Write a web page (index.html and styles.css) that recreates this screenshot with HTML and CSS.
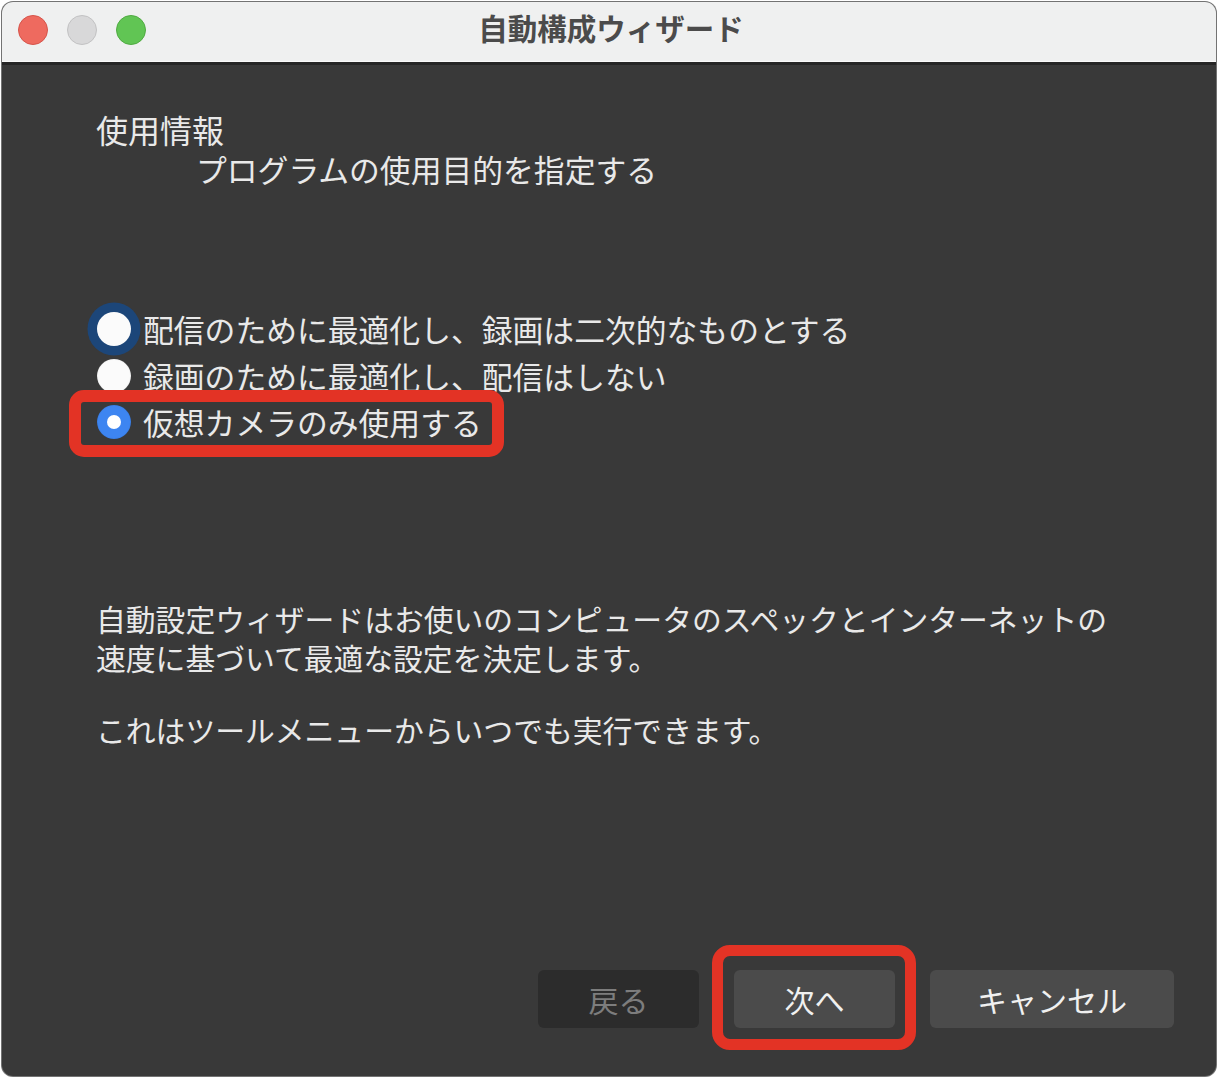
FILE: index.html
```html
<!DOCTYPE html>
<html lang="ja">
<head>
<meta charset="utf-8">
<title>自動構成ウィザード</title>
<link rel="stylesheet" href="styles.css">
</head>
<body>
<div class="window">
  <div class="titlebar">
    <div class="lights">
      <span class="light red"></span>
      <span class="light grey"></span>
      <span class="light green"></span>
    </div>
    <div class="title">自動構成ウィザード</div>
  </div>
  <div class="content">
    <div class="heading">使用情報</div>
    <div class="subheading">プログラムの使用目的を指定する</div>
    <div class="radios">
      <div class="radio-row">
        <span class="radio focus"></span>
        <span class="label">配信のために最適化し、録画は二次的なものとする</span>
      </div>
      <div class="radio-row">
        <span class="radio"></span>
        <span class="label">録画のために最適化し、配信はしない</span>
      </div>
      <div class="radio-row highlighted">
        <span class="radio checked"></span>
        <span class="label">仮想カメラのみ使用する</span>
        <span class="mark mark-radio"></span>
      </div>
    </div>
    <p class="desc">自動設定ウィザードはお使いのコンピュータのスペックとインターネットの<br>速度に基づいて最適な設定を決定します。</p>
    <p class="desc second">これはツールメニューからいつでも実行できます。</p>
    <div class="buttons">
      <button class="btn disabled">戻る</button>
      <div class="btn-wrap">
        <button class="btn">次へ</button>
        <span class="mark mark-btn"></span>
      </div>
      <button class="btn wide">キャンセル</button>
    </div>
  </div>
</div>
</body>
</html>
```

FILE: styles.css
```css
* { box-sizing: border-box; }

html, body {
  margin: 0;
  padding: 0;
  background: #ffffff;
}

body {
  padding: 2px 2px 2px 2px;
  font-family: "Noto Sans CJK JP", "Noto Sans", sans-serif;
}

.window {
  width: 1214px;
  height: 1074px;
  border-radius: 11px;
  overflow: hidden;
  background: #393939;
  display: flex;
  flex-direction: column;
  box-shadow: 0 0 0 1px rgba(0, 0, 0, 0.55);
}

.titlebar {
  height: 63px;
  flex: none;
  background: #eff0f0;
  border-bottom: 3px solid #262626;
  box-shadow: inset 0 -1px 0 #fafafa;
  position: relative;
  display: flex;
  align-items: center;
  justify-content: center;
}

.lights {
  position: absolute;
  left: 16px;
  top: 13px;
  display: flex;
  gap: 19px;
}

.light {
  width: 30px;
  height: 30px;
  border-radius: 50%;
  display: block;
}
.light.red { background: #ee6a5f; border: 1px solid #d6544a; }
.light.grey { background: #d8d8d9; border: 1px solid #c2c2c3; }
.light.green { background: #61c554; border: 1px solid #50ab42; }

.title {
  font-size: 29.5px;
  font-weight: 700;
  color: #4b4b4b;
  line-height: 40px;
  margin-top: -10px;
  margin-left: 4px;
}

.content {
  flex: 1;
  display: flex;
  flex-direction: column;
  padding: 44px 42px 48px 94px;
  color: #e9e9e9;
  font-size: 30px;
}

.heading {
  line-height: 40px;
  font-size: 32px;
}

.subheading {
  line-height: 40px;
  padding-left: 100px;
  font-size: 30.8px;
}

.radios {
  margin-top: 117px;
  display: flex;
  flex-direction: column;
}

.radio-row {
  height: 46.5px;
  display: flex;
  align-items: center;
  gap: 12px;
  position: relative;
}

.radio {
  width: 34px;
  height: 34px;
  border-radius: 50%;
  background: #fbfbfb;
  flex: none;
  margin-left: 1px;
  position: relative;
  box-shadow: inset 0 0 1px rgba(0, 0, 0, 0.3);
}

.radio.focus {
  box-shadow: 0 0 0 9.5px #1c4679;
}

.radio.checked {
  background: #3d85f1;
}
.radio.checked::after {
  content: "";
  position: absolute;
  left: 10px;
  top: 10px;
  width: 14px;
  height: 14px;
  border-radius: 50%;
  background: #ffffff;
}

.label {
  line-height: 40px;
  white-space: nowrap;
  font-size: 30.8px;
}

.mark {
  position: absolute;
  border: 12px solid #e33325;
  pointer-events: none;
}

.mark-radio {
  left: -27px;
  top: -9px;
  width: 435px;
  height: 67px;
  border-radius: 15px;
}

.desc {
  margin: 153px 0 0 0;
  line-height: 39px;
  white-space: nowrap;
  font-size: 29.8px;
}

.desc.second {
  margin-top: 33px;
}

.buttons {
  margin-top: auto;
  display: flex;
  justify-content: flex-end;
  gap: 35px;
}

.btn-wrap {
  position: relative;
  display: flex;
}

.btn {
  width: 161px;
  height: 58px;
  border: none;
  border-radius: 6px;
  background: #4b4b4b;
  color: #f0f0f0;
  font-family: "Noto Sans CJK JP", "Noto Sans", sans-serif;
  font-size: 30px;
  padding: 0;
  line-height: 58px;
}

.btn.wide { width: 244px; }

.btn.disabled {
  background: #2c2c2c;
  color: #7d7d7d;
}

.mark-btn {
  left: -22px;
  top: -25px;
  width: 204px;
  height: 105px;
  border-radius: 18px;
  border-width: 11px;
}
```
